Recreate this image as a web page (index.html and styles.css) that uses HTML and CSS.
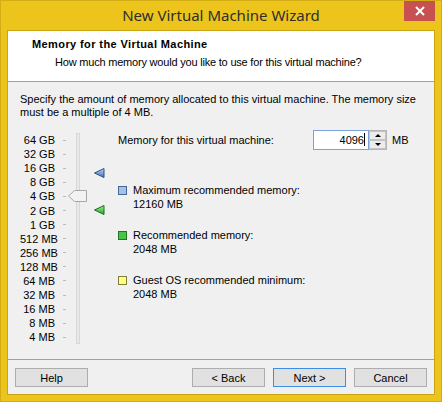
FILE: index.html
```html
<!DOCTYPE html>
<html lang="en">
<head>
  <meta charset="UTF-8" />
  <title>New Virtual Machine Wizard</title>
  <link rel="stylesheet" href="styles.css">
</head>
<body>

  <div class="window">
    <div class="titlebar">
      <span></span>
      <div class="title">New Virtual Machine Wizard</div>
      <button class="close" type="button">
        <svg width="10" height="10" viewBox="0 0 10 10">
          <path d="M1 1 L9 9 M9 1 L1 9" stroke="#fff" stroke-width="2"/>
        </svg>
      </button>
    </div>

    <div class="content">
      <div class="header">
        <div class="header-title">Memory for the Virtual Machine</div>
        <div class="header-sub">How much memory would you like to use for this virtual machine?</div>
      </div>

      <div class="body">
        <p class="intro">Specify the amount of memory allocated to this virtual machine. The memory size must be a multiple of 4 MB.</p>

        <div class="main">
          <div class="scale">
            <ul class="ticks">
              <li><span class="tick-label">64 GB</span><span class="tick"></span></li>
              <li><span class="tick-label">32 GB</span><span class="tick"></span></li>
              <li><span class="tick-label">16 GB</span><span class="tick"></span></li>
              <li><span class="tick-label">8 GB</span><span class="tick"></span></li>
              <li><span class="tick-label">4 GB</span><span class="tick"></span></li>
              <li><span class="tick-label">2 GB</span><span class="tick"></span></li>
              <li><span class="tick-label">1 GB</span><span class="tick"></span></li>
              <li><span class="tick-label">512 MB</span><span class="tick"></span></li>
              <li><span class="tick-label">256 MB</span><span class="tick"></span></li>
              <li><span class="tick-label">128 MB</span><span class="tick"></span></li>
              <li><span class="tick-label">64 MB</span><span class="tick"></span></li>
              <li><span class="tick-label">32 MB</span><span class="tick"></span></li>
              <li><span class="tick-label">16 MB</span><span class="tick"></span></li>
              <li><span class="tick-label">8 MB</span><span class="tick"></span></li>
              <li><span class="tick-label">4 MB</span><span class="tick"></span></li>
            </ul>
            <div class="track"></div>

            <svg class="thumb" width="20" height="12" viewBox="0 0 20 12">
              <polygon points="0.5,6 6.5,0.5 18.5,0.5 18.5,11.5 6.5,11.5" fill="#f2f2f2" stroke="#a8a8a8"/>
            </svg>

            <svg class="marker marker-max" width="11" height="10" viewBox="0 0 11 10">
              <defs>
                <linearGradient id="gblue" x1="0" y1="0" x2="0" y2="1">
                  <stop offset="0" stop-color="#c4d6ef"/>
                  <stop offset="1" stop-color="#3f6fb0"/>
                </linearGradient>
              </defs>
              <polygon points="0.5,5 10,0.5 10,9.5" fill="url(#gblue)" stroke="#28508a"/>
            </svg>

            <svg class="marker marker-rec" width="11" height="10" viewBox="0 0 11 10">
              <defs>
                <linearGradient id="ggreen" x1="0" y1="0" x2="0" y2="1">
                  <stop offset="0" stop-color="#9ef09e"/>
                  <stop offset="1" stop-color="#1fa81f"/>
                </linearGradient>
              </defs>
              <polygon points="0.5,5 10,0.5 10,9.5" fill="url(#ggreen)" stroke="#1b6e1b"/>
            </svg>
          </div>

          <div class="settings">
            <div class="mem-row">
              <label class="mem-label" for="memory">Memory for this virtual machine:</label>
              <div class="spin">
                <div class="spin-input" id="memory">4096<span class="caret"></span></div>
                <div class="spin-buttons">
                  <span class="spin-btn"><span class="arrow-up"></span></span>
                  <span class="spin-btn"><span class="arrow-down"></span></span>
                </div>
              </div>
              <span class="unit">MB</span>
            </div>

            <div class="legend">
              <div class="legend-item">
                <span class="swatch swatch-blue"></span>
                <div>
                  <div>Maximum recommended memory:</div>
                  <div>12160 MB</div>
                </div>
              </div>
              <div class="legend-item">
                <span class="swatch swatch-green"></span>
                <div>
                  <div>Recommended memory:</div>
                  <div>2048 MB</div>
                </div>
              </div>
              <div class="legend-item">
                <span class="swatch swatch-yellow"></span>
                <div>
                  <div>Guest OS recommended minimum:</div>
                  <div>2048 MB</div>
                </div>
              </div>
            </div>
          </div>
        </div>
      </div>

      <div class="footer">
        <button class="btn" type="button">Help</button>
        <div class="footer-right">
          <button class="btn" type="button">&lt; Back</button>
          <button class="btn btn-default" type="button">Next &gt;</button>
          <button class="btn" type="button">Cancel</button>
        </div>
      </div>
    </div>
  </div>

</body>
</html>
```

FILE: styles.css
```css
body {
  margin: 0;
  font-family: "Liberation Sans", Arial, sans-serif;
  font-size: 11px;
  color: #000;
}
.window {
  width: 442px;
  height: 402px;
  box-sizing: border-box;
  background: #ecc41c;
  border: 1px solid #d2ad16;
  display: flex;
  flex-direction: column;
}
.titlebar {
  height: 29px;
  display: grid;
  grid-template-columns: 1fr auto 1fr;
  align-items: center;
}
.title {
  font-family: "Noto Sans", sans-serif;
  font-size: 15px;
  color: #2e2e2e;
  line-height: 29px;
}
.close {
  justify-self: end;
  align-self: start;
  width: 31px;
  height: 20px;
  margin-right: 6px;
  padding: 0;
  border: 0;
  background: #c75050;
  display: flex;
  align-items: center;
  justify-content: center;
}
.content {
  margin: 0 6px 6px;
  border: 1px solid #c9a514;
  background: #f0f0f0;
  height: 363px;
  display: flex;
  flex-direction: column;
}
.header {
  height: 51px;
  box-sizing: border-box;
  background: #fff;
  border-bottom: 1px solid #a0a0a0;
  padding-top: 7px;
  line-height: 13px;
}
.header-title {
  font-weight: bold;
  padding-left: 24px;
  letter-spacing: 0.4px;
}
.header-sub {
  margin-top: 5px;
  padding-left: 47px;
  letter-spacing: -0.2px;
}
.body {
  flex: 1;
  padding: 11px 8px 0 12px;
}
.intro {
  margin: 0;
  line-height: 13px;
}
.main {
  display: flex;
  align-items: flex-start;
  margin-top: 11px;
}
.scale {
  position: relative;
  width: 98px;
  flex-shrink: 0;
  display: flex;
  padding-top: 3px;
}
.ticks {
  list-style: none;
  margin: 0;
  padding: 0;
}
.ticks li {
  display: flex;
  align-items: center;
  height: 14.1px;
}
.tick-label {
  width: 35px;
  text-align: right;
  white-space: nowrap;
}
.tick {
  width: 3px;
  height: 1px;
  margin-left: 8px;
  background: #bdbdbd;
}
.track {
  width: 4px;
  box-sizing: border-box;
  margin: 0 0 0 10px;
  border: 1px solid #d8d8d8;
  background: #e8e8e8;
}
.thumb {
  position: absolute;
  left: 48px;
  top: 60px;
}
.marker {
  position: absolute;
  left: 74px;
}
.marker-max {
  top: 38px;
}
.marker-rec {
  top: 75px;
}
.settings {
  flex: 1;
}
.mem-row {
  display: flex;
  align-items: center;
  height: 20px;
}
.mem-label {
  width: 195px;
}
.spin {
  display: flex;
}
.spin-input {
  width: 56px;
  height: 20px;
  box-sizing: border-box;
  border: 1px solid #7aa2d6;
  background: #fff;
  text-align: right;
  padding-right: 3px;
  line-height: 18px;
}
.caret {
  display: inline-block;
  width: 1px;
  height: 13px;
  background: #000;
  vertical-align: -2px;
}
.spin-buttons {
  width: 18px;
  height: 20px;
  box-sizing: border-box;
  border: 1px solid #b5b5b5;
  border-left: 0;
  display: flex;
  flex-direction: column;
}
.spin-btn {
  flex: 1;
  display: flex;
  align-items: center;
  justify-content: center;
  background: #ececec;
  border: 1px solid #c4c4c4;
}
.arrow-up {
  border-left: 3px solid transparent;
  border-right: 3px solid transparent;
  border-bottom: 3px solid #000;
}
.arrow-down {
  border-left: 3px solid transparent;
  border-right: 3px solid transparent;
  border-top: 3px solid #000;
}
.unit {
  margin-left: 5px;
}
.legend {
  margin-top: 33px;
}
.legend-item {
  display: flex;
  align-items: flex-start;
  gap: 6px;
  line-height: 14px;
  margin-bottom: 17px;
}
.swatch {
  width: 9px;
  height: 9px;
  box-sizing: border-box;
  margin-top: 3px;
  border: 1px solid;
}
.swatch-blue {
  background: #a9c0df;
  border-color: #44679a;
}
.swatch-green {
  background: #4cc24c;
  border-color: #1d7a1d;
}
.swatch-yellow {
  background: #ffff84;
  border-color: #7f7f3a;
}
.footer {
  height: 35px;
  box-sizing: border-box;
  border-top: 1px solid #a0a0a0;
  padding: 8px 7px 0;
  display: flex;
  justify-content: space-between;
  align-items: flex-start;
}
.footer-right {
  display: flex;
  gap: 8px;
}
.btn {
  width: 73px;
  height: 19px;
  padding: 0;
  font-family: inherit;
  font-size: 11px;
  color: #000;
  background: #e1e1e1;
  border: 1px solid #adadad;
}
.btn-default {
  border-color: #3a8ee6;
}
```
